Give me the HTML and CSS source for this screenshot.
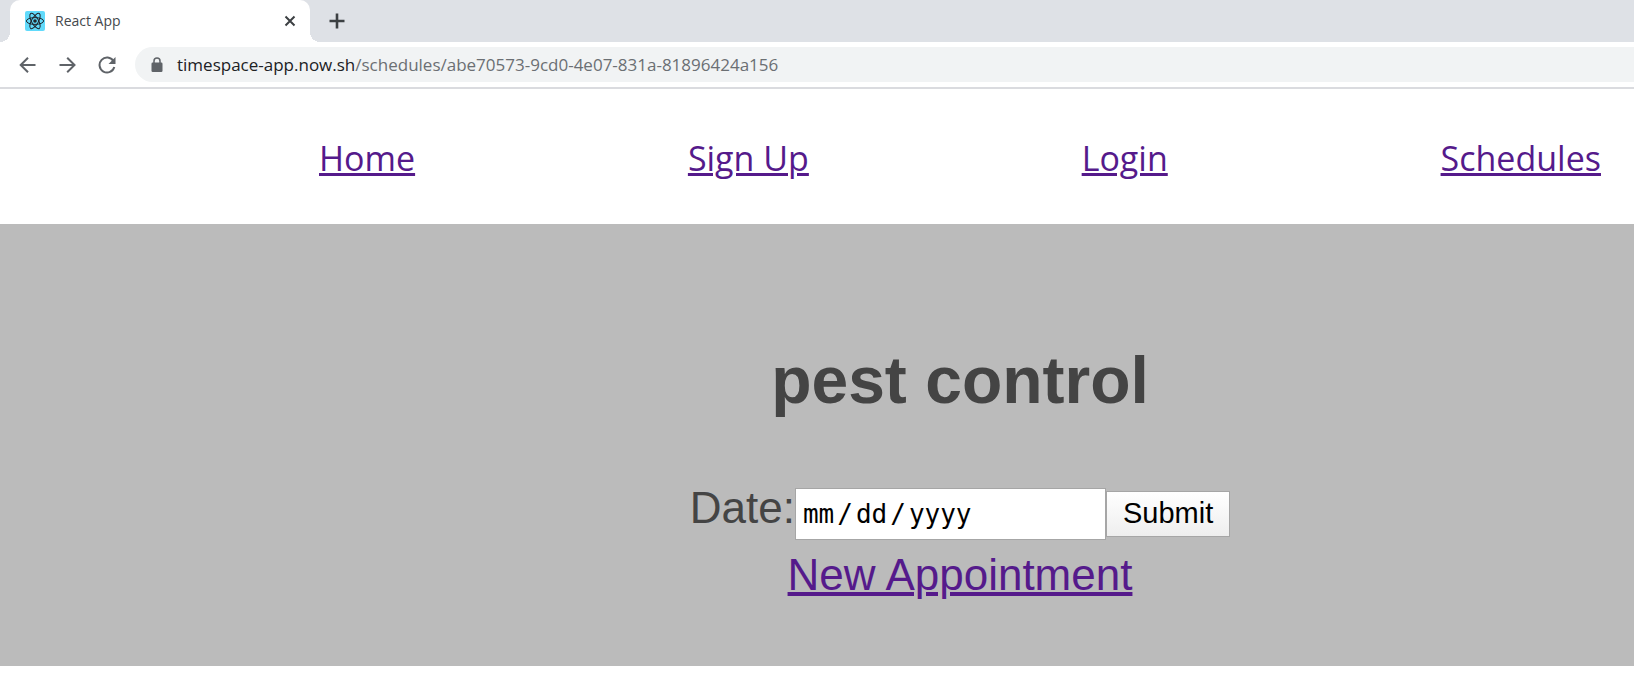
FILE: index.html
```html
<!DOCTYPE html>
<html lang="en">
<head>
<meta charset="utf-8">
<title>React App</title>
<link rel="stylesheet" href="styles.css">
</head>
<body>
<header class="browser">
  <div class="tab-strip">
    <div class="tab">
      <svg class="favicon" viewBox="0 0 20 20" aria-hidden="true">
        <rect width="20" height="20" rx="2" fill="#61dafb"/>
        <g fill="none" stroke="#20232a" stroke-width="1">
          <ellipse cx="10" cy="10" rx="8.6" ry="3.4"/>
          <ellipse cx="10" cy="10" rx="8.6" ry="3.4" transform="rotate(60 10 10)"/>
          <ellipse cx="10" cy="10" rx="8.6" ry="3.4" transform="rotate(120 10 10)"/>
        </g>
        <circle cx="10" cy="10" r="1.8" fill="#20232a"/>
      </svg>
      <span class="tab-title">React App</span>
      <button class="icon-button tab-close" aria-label="Close tab">
        <svg width="12" height="12" viewBox="0 0 12 12"><path d="M1.5 1.5l9 9M10.5 1.5l-9 9" stroke="#3c4043" stroke-width="2"/></svg>
      </button>
    </div>
    <button class="icon-button new-tab" aria-label="New tab">
      <svg width="16" height="16" viewBox="0 0 16 16"><path d="M8 .5v15M.5 8h15" stroke="#3c4043" stroke-width="2.6"/></svg>
    </button>
  </div>
  <div class="toolbar">
    <button class="icon-button" aria-label="Back">
      <svg width="18" height="18" viewBox="0 0 18 18"><path d="M17.5 9H3M10 1.7L2.700 9l7.300 7.300" fill="none" stroke="#5f6368" stroke-width="2"/></svg>
    </button>
    <button class="icon-button" aria-label="Forward">
      <svg width="18" height="18" viewBox="0 0 18 18"><path d="M1.500 9h15M9.200 1.700L16.500 9l-7.300 7.300" fill="none" stroke="#5f6368" stroke-width="2"/></svg>
    </button>
    <button class="icon-button" aria-label="Reload">
      <svg width="18" height="18" viewBox="0 0 18 18"><path d="M15.4 5A7.5 7.5 0 1 0 16.3 11" fill="none" stroke="#5f6368" stroke-width="2"/><path d="M17.5 1v7h-7z" fill="#5f6368"/></svg>
    </button>
    <div class="address">
      <svg width="12" height="16" viewBox="0 0 12 16" aria-hidden="true"><rect x="0.5" y="5.5" width="11" height="9.5" rx="1.2" fill="#5f6368"/><path d="M3 6V4a3 3 0 0 1 6 0v2" fill="none" stroke="#5f6368" stroke-width="1.5"/></svg>
      <span class="url"><span class="host">timespace-app.now.sh</span>/schedules/abe70573-9cd0-4e07-831a-81896424a156</span>
    </div>
  </div>
</header>
<nav class="site-nav">
  <a href="#home">Home</a>
  <a href="#signup">Sign Up</a>
  <a href="#login">Login</a>
  <a href="#schedules">Schedules</a>
</nav>
<main class="schedule">
  <h1 class="schedule-title">pest control</h1>
  <form class="date-form">
    <label for="date">Date:</label>
    <input class="date-input" id="date" type="date">
    <button class="submit" type="submit">Submit</button>
  </form>
  <a class="new-link" href="#new">New Appointment</a>
</main>
</body>
</html>
```
FILE: styles.css
```css
* {
  box-sizing: border-box;
}

body {
  margin: 0;
  background: #fff;
  font-family: "Liberation Sans", Arial, sans-serif;
}

a {
  color: #551a8b;
}

.browser {
  font-family: "Open Sans", "Noto Sans", sans-serif;
  border-bottom: 2px solid #dadbdf;
}

.tab-strip {
  display: flex;
  height: 42px;
  padding-left: 10px;
  background: #dee1e6;
}

.tab {
  position: relative;
  display: flex;
  align-items: center;
  width: 300px;
  padding: 0 14px 0 15px;
  background: #fff;
  border-radius: 10px 10px 0 0;
}

.tab::before,
.tab::after {
  content: "";
  position: absolute;
  bottom: 0;
  width: 10px;
  height: 10px;
}

.tab::before {
  right: 100%;
  background: radial-gradient(circle at 0 0, #dee1e6 10px, #fff 10px);
}

.tab::after {
  left: 100%;
  background: radial-gradient(circle at 100% 0, #dee1e6 10px, #fff 10px);
}

.favicon {
  width: 20px;
  height: 20px;
  margin-right: 10px;
}

.tab-title {
  flex: 1;
  font-size: 14px;
  line-height: 18px;
  color: #45494d;
}

.icon-button {
  display: flex;
  padding: 0;
  border: 0;
  background: none;
}

.new-tab {
  align-self: center;
  margin-left: 19px;
}

.toolbar {
  display: flex;
  align-items: center;
  gap: 22px;
  height: 45px;
  padding-left: 18px;
}

.address {
  display: flex;
  flex: 1;
  align-items: center;
  gap: 14px;
  height: 35px;
  margin-left: -3px;
  padding-left: 16px;
  background: #f1f3f4;
  border-radius: 18px 0 0 18px;
}

.url {
  font-size: 17px;
  color: #6b6f73;
}

.host {
  color: #202124;
}

.site-nav {
  display: flex;
  align-items: center;
  justify-content: space-between;
  height: 135px;
  padding: 2px 33px 0 319px;
  font-family: "Open Sans", "Noto Sans", sans-serif;
  font-size: 34px;
}

.site-nav a {
  text-decoration-thickness: 3px;
}

.schedule {
  display: flex;
  flex-direction: column;
  align-items: center;
  padding: 118px 0 66px 286px;
  background: #bbb;
  color: #444;
  font-size: 44px;
  line-height: 50px;
}

.schedule-title {
  margin: 0 0 65px;
  font-size: 66px;
  line-height: 76px;
}

.date-form {
  display: flex;
  align-items: baseline;
}

.date-input {
  width: 311px;
  height: 52px;
  padding: 0 6px;
  border: 1px solid #a6a6a6;
  background: #fff;
  color: #000;
  font-family: "DejaVu Sans Mono", monospace;
  font-size: 26px;
}

.date-input::-webkit-datetime-edit-text {
  padding: 0 2px;
}

.date-input::-webkit-calendar-picker-indicator {
  visibility: hidden;
}

.submit {
  height: 46px;
  padding: 0 16px;
  border: 1px solid #a6a6a6;
  background: linear-gradient(#fff, #eee);
  color: #000;
  font-family: inherit;
  font-size: 29px;
}

.new-link {
  margin-top: 10px;
  text-decoration-thickness: 4px;
}
```
